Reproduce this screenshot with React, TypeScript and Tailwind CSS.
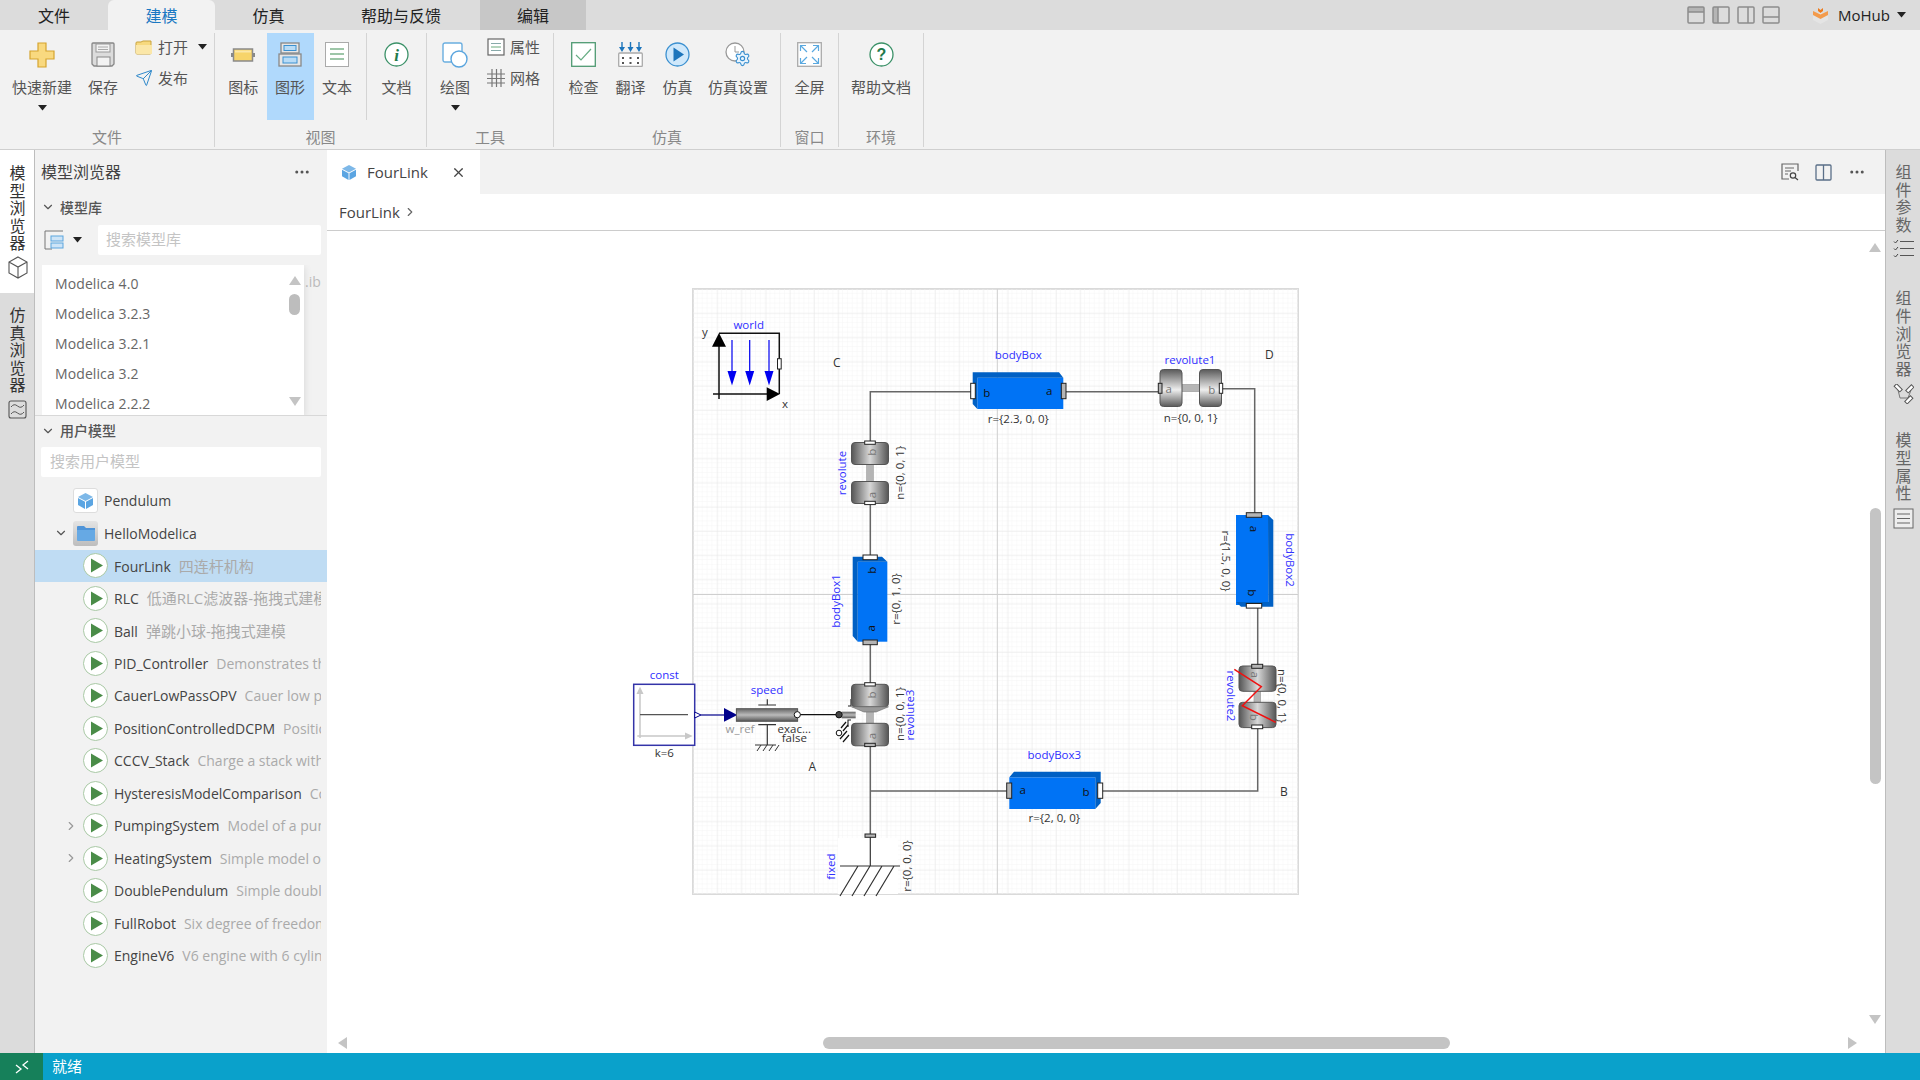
import React from "react";
import { ChevronDown, ChevronRight, Ellipsis, Send, Settings, X } from "lucide-react";

const labelCls = "text-[15px] leading-[20px] text-[#555] whitespace-nowrap";

function Caret({ className = "" }: { className?: string }) {
  return (
    <svg width="9" height="6" viewBox="0 0 9 6" className={className}>
      <path d="M0 0H9L4.5 5.5Z" fill="#222" />
    </svg>
  );
}

function RibbonButton({
  label,
  icon,
  w,
  active,
  caret,
}: {
  label: string;
  icon: React.ReactNode;
  w: string;
  active?: boolean;
  caret?: boolean;
}) {
  return (
    <div className={`${w} h-[87px] flex flex-col items-center pt-[9px] ${active ? "bg-[#b0d9fc]" : ""}`}>
      <div className="h-[25px] flex items-center justify-center">{icon}</div>
      <div className={`${labelCls} mt-[10px]`}>{label}</div>
      {caret && <Caret className="mt-[8px]" />}
    </div>
  );
}

function SmallButton({ icon, label, caret }: { icon: React.ReactNode; label: string; caret?: boolean }) {
  return (
    <div className="h-[30px] flex items-center">
      <div className="w-[18px] flex justify-center">{icon}</div>
      <span className={`${labelCls} ml-[5px]`}>{label}</span>
      {caret && <Caret className="ml-[10px]" />}
    </div>
  );
}

function Group({ label, w, children }: { label: string; w: string; children: React.ReactNode }) {
  return (
    <div className={`${w} h-[114px] border-r border-[#d4d4d4] flex flex-col shrink-0`}>
      <div className="h-[87px] flex">{children}</div>
      <div className="h-[27px] pt-[7px] text-center text-[15px] leading-[20px] text-[#888]">{label}</div>
    </div>
  );
}

const PlusIcon = (
  <svg width="26" height="26" viewBox="0 0 26 26">
    <path d="M9 1H17V9H25V17H17V25H9V17H1V9H9Z" fill="#f9d97f" stroke="#d5a42f" strokeWidth="1.2" />
  </svg>
);
const SaveIcon = (
  <svg width="24" height="25" viewBox="0 0 24 25">
    <path d="M2 1H22Q23 1 23 2V22L21 24H3L1 22V2Q1 1 2 1Z" fill="#dcdcdc" stroke="#888" strokeWidth="1.3" />
    <rect x="5" y="2" width="14" height="8" fill="#f3f3f3" stroke="#999" />
    <path d="M7 5H17M7 7.5H17" stroke="#aaa" />
    <rect x="6" y="15" width="13" height="9" fill="#f3f3f3" stroke="#888" />
  </svg>
);
const FolderIcon = (
  <svg width="18" height="15" viewBox="0 0 18 15">
    <path d="M1 3Q1 2 2 2H6L8 1H16V13Q16 14 15 14H2Q1 14 1 13Z" fill="#f7d97e" stroke="#c9a33c" />
    <path d="M1 5H17V13Q17 14 16 14H2Q1 14 1 13Z" fill="#fbe7a8" />
  </svg>
);
const GaugeIcon = (
  <svg width="24" height="14" viewBox="0 0 24 14">
    <rect x="0" y="5" width="24" height="4" fill="#888" />
    <rect x="2.500" y="1" width="19" height="12" fill="#f7d46a" stroke="#8a8a8a" strokeWidth="1.500" />
    <rect x="4" y="2.500" width="16" height="2" fill="#fbe7a8" />
  </svg>
);
const DiagramIcon = (
  <svg width="24" height="25" viewBox="0 0 24 25">
    <rect x="3" y="1" width="18" height="10" fill="#e6e6e6" stroke="#888" strokeWidth="1.3" />
    <rect x="6" y="3.5" width="12" height="5" fill="#b9dcf6" stroke="#3b90d0" />
    <rect x="1" y="12" width="22" height="12" fill="#e6e6e6" stroke="#888" strokeWidth="1.3" />
    <rect x="5" y="15" width="14" height="6" fill="#b9dcf6" stroke="#3b90d0" />
  </svg>
);
const TextIcon = (
  <svg width="24" height="25" viewBox="0 0 24 25">
    <rect x="0.5" y="0.5" width="23" height="24" fill="#fff" stroke="#aaa" />
    <path d="M5 7H19M5 12H19M5 17H19" stroke="#7eb48c" strokeWidth="1.4" />
  </svg>
);
const InfoIcon = (
  <svg width="25" height="25" viewBox="0 0 25 25">
    <circle cx="12.5" cy="12.5" r="11.5" fill="#fff" stroke="#3b9168" strokeWidth="1.3" />
    <text x="12.5" y="18.5" textAnchor="middle" fontSize="17" fontWeight="700" fontStyle="italic" fontFamily="'Liberation Serif',serif" fill="#1f7a4c">
      i
    </text>
  </svg>
);
const DrawIcon = (
  <svg width="26" height="26" viewBox="0 0 26 26">
    <rect x="1" y="1" width="19" height="19" rx="2" fill="#fff" stroke="#6aaee0" strokeWidth="1.4" />
    <circle cx="17" cy="17" r="8" fill="#fff" stroke="#5aa5de" strokeWidth="1.4" />
  </svg>
);
const PropsIcon = (
  <svg width="18" height="18" viewBox="0 0 18 18">
    <rect x="1" y="1" width="16" height="16" fill="#fff" stroke="#666" strokeWidth="1.2" />
    <path d="M4 5.5H14" stroke="#8aa" />
    <path d="M4 9H14" stroke="#6aa97c" />
    <path d="M4 12.5H14" stroke="#8aa" />
  </svg>
);
const GridIcon = (
  <svg width="18" height="18" viewBox="0 0 18 18">
    <path d="M5 0V18M9.500 0V18M14 0V18M0 5H18M0 9.500H18M0 14H18" stroke="#777" strokeWidth="1.2" />
  </svg>
);
const CheckIcon = (
  <svg width="25" height="25" viewBox="0 0 25 25">
    <rect x="0.7" y="0.7" width="23.600" height="23.600" fill="#fff" stroke="#4f9a72" strokeWidth="1.3" />
    <path d="M5 13L10 18L20 7" fill="none" stroke="#67ad84" strokeWidth="1.2" />
  </svg>
);
const TranslateIcon = (
  <svg width="25" height="25" viewBox="0 0 25 25">
    <path d="M4 0V7M12.500 0V7M21 0V7" stroke="#1c75bc" strokeWidth="1.4" />
    <path d="M1 5H7L4 10ZM9.500 5H15.500L12.500 10ZM18 5H24L21 10Z" fill="#1c75bc" />
    <rect x="0.7" y="11" width="23.600" height="13.500" rx="1" fill="#fff" stroke="#aaa" strokeWidth="1.3" />
    <path d="M4 15H6V17H4ZM11.500 15H13.500V17H11.500ZM19 15H21V17H19ZM4 20H6V22H4ZM11.500 20H13.500V22H11.500ZM19 20H21V22H19Z" fill="#555" />
  </svg>
);
const RunIcon = (
  <svg width="25" height="25" viewBox="0 0 25 25">
    <circle cx="12.500" cy="12.500" r="11.500" fill="#cfe8fb" stroke="#3b90d0" strokeWidth="1.3" />
    <path d="M8.500 5.500L19 12.500L8.500 19.500Z" fill="#1c75bc" />
  </svg>
);
const SimSetIcon = (
  <div className="relative w-[26px] h-[25px]">
    <svg width="20" height="20" viewBox="0 0 20 20" className="absolute left-0 top-0">
      <circle cx="10" cy="10" r="9" fill="#fff" stroke="#999" strokeWidth="1.3" />
      <path d="M10 4V10H14" fill="none" stroke="#999" />
    </svg>
    <Settings size={17} strokeWidth={1.6} className="absolute right-0 bottom-0 text-[#3b90d0] fill-[#e8f4fd]" />
  </div>
);
const FullIcon = (
  <svg width="25" height="25" viewBox="0 0 25 25">
    <rect x="0.7" y="0.7" width="23.600" height="23.600" fill="#fff" stroke="#aaa" strokeWidth="1.3" />
    <path d="M4 4L10 10M21 4L15 10M4 21L10 15M21 21L15 15" stroke="#5aa9e0" strokeWidth="1.2" />
    <path d="M3.500 9V3.500H9M16 3.500H21.500V9M3.500 16V21.500H9M16 21.500H21.500V16" fill="none" stroke="#5aa9e0" strokeWidth="1.2" />
  </svg>
);
const HelpIcon = (
  <svg width="25" height="25" viewBox="0 0 25 25">
    <circle cx="12.500" cy="12.500" r="11.500" fill="#fff" stroke="#3b9168" strokeWidth="1.3" />
    <text x="12.500" y="18" textAnchor="middle" fontSize="16" fontWeight="700" fontFamily="'Liberation Sans',sans-serif" fill="#1f7a4c">
      ?
    </text>
  </svg>
);

function TopBar() {
  const tabs = [
    { t: "文件", w: "w-[108px]", c: "text-[#222]" },
    { t: "建模", w: "w-[107px]", c: "bg-[#f2f2f2] rounded-t-[6px] text-[#1a78c2]" },
    { t: "仿真", w: "w-[107px]", c: "text-[#222]" },
    { t: "帮助与反馈", w: "w-[158px]", c: "text-[#222]" },
    { t: "编辑", w: "w-[106px]", c: "bg-[#c7c7c7] text-[#222]" },
  ];
  const layouts = [
    { band: "M1 1H17V6H1Z", d: "M1 6H17" },
    { band: "M1 1H6V17H1Z", d: "M6 1V17" },
    { band: "", d: "M11 1V17" },
    { band: "", d: "M1 11H17" },
  ];
  return (
    <div className="h-[30px] bg-[#dcdcdc] flex items-center shrink-0">
      {tabs.map((t) => (
        <div key={t.t} className={`${t.w} h-[30px] leading-[32px] text-center text-[16px] ${t.c}`}>
          {t.t}
        </div>
      ))}
      <div className="ml-auto flex items-center gap-[7px]">
        {layouts.map((l) => (
          <svg key={l.d} width="18" height="18" viewBox="0 0 18 18">
            {l.band && <path d={l.band} fill="#b5b5b5" />}
            <rect x="1" y="1" width="16" height="16" rx="1" fill="none" stroke="#8c8c8c" strokeWidth="1.5" />
            <path d={l.d} stroke="#8c8c8c" strokeWidth="1.5" />
          </svg>
        ))}
      </div>
      <svg width="17" height="17" viewBox="0 0 17 17" className="ml-[32px]">
        <path d="M8.500 5L16 8.500V13L8.500 17L1 13V8.500Z" fill="#e4e4e4" />
        <path d="M1 4L8.500 7.500L16 4V8L8.500 12L1 8Z" fill="#f39b4c" />
        <path d="M6 1L8.500 3L11 1V4L8.500 6L6 4Z" fill="#ef7a1a" />
      </svg>
      <span className="ml-[9px] text-[15px] text-[#222]">MoHub</span>
      <Caret className="ml-[7px] mr-[14px]" />
    </div>
  );
}

function Ribbon() {
  return (
    <div className="h-[120px] bg-[#f2f2f2] border-b border-[#cfcfcf] flex pt-[3px] shrink-0">
      <Group label="文件" w="w-[215px]">
        <RibbonButton w="w-[84px]" label="快速新建" icon={PlusIcon} caret />
        <RibbonButton w="w-[38px]" label="保存" icon={SaveIcon} />
        <div className="ml-[13px] -mt-[1px] flex flex-col gap-[1px]">
          <SmallButton icon={FolderIcon} label="打开" caret />
          <SmallButton icon={<Send size={18} strokeWidth={1.3} className="text-[#2a86c8]" />} label="发布" />
        </div>
      </Group>
      <Group label="视图" w="w-[212px]">
        <div className="w-[5px]" />
        <RibbonButton w="w-[47px]" label="图标" icon={GaugeIcon} />
        <RibbonButton w="w-[47px]" label="图形" icon={DiagramIcon} active />
        <RibbonButton w="w-[47px]" label="文本" icon={TextIcon} />
        <div className="ml-[6px] h-[87px] border-l border-[#d4d4d4]" />
        <RibbonButton w="w-[59px]" label="文档" icon={InfoIcon} />
      </Group>
      <Group label="工具" w="w-[127px]">
        <RibbonButton w="w-[56px]" label="绘图" icon={DrawIcon} caret />
        <div className="ml-[4px] -mt-[1px] flex flex-col gap-[1px]">
          <SmallButton icon={PropsIcon} label="属性" />
          <SmallButton icon={GridIcon} label="网格" />
        </div>
      </Group>
      <Group label="仿真" w="w-[227px]">
        <div className="w-[6px]" />
        <RibbonButton w="w-[47px]" label="检查" icon={CheckIcon} />
        <RibbonButton w="w-[47px]" label="翻译" icon={TranslateIcon} />
        <RibbonButton w="w-[47px]" label="仿真" icon={RunIcon} />
        <RibbonButton w="w-[74px]" label="仿真设置" icon={SimSetIcon} />
      </Group>
      <Group label="窗口" w="w-[58px]">
        <RibbonButton w="w-[57px]" label="全屏" icon={FullIcon} />
      </Group>
      <Group label="环境" w="w-[85px]">
        <RibbonButton w="w-[84px]" label="帮助文档" icon={HelpIcon} />
      </Group>
    </div>
  );
}

function VText({ text, className = "" }: { text: string; className?: string }) {
  return (
    <div className={`flex flex-col items-center text-[16px] ${className}`}>
      {text.split("").map((c, i) => (
        <span key={i} className="block h-[17.6px] leading-[17.6px]">
          {c}
        </span>
      ))}
    </div>
  );
}

function LeftRail() {
  return (
    <div className="w-[35px] shrink-0 bg-[#dcdcdc] border-r border-[#bdbdbd] flex flex-col">
      <div className="h-[143px] bg-white flex flex-col items-center pt-[15px] pl-[1px] text-[#333]">
        <VText text="模型浏览器" />
        <svg width="20" height="23" viewBox="0 0 20 23" className="mt-[3px]">
          <path d="M10 1L19 6V17L10 22L1 17V6Z M1 6L10 11L19 6 M10 11V22" fill="#fff" stroke="#555" strokeWidth="1.1" />
        </svg>
      </div>
      <div className="flex flex-col items-center pt-[14px] pl-[1px] text-[#333]">
        <VText text="仿真浏览器" />
        <svg width="19" height="19" viewBox="0 0 19 19" className="mt-[5px]">
          <rect x="1" y="1" width="17" height="17" rx="2" fill="none" stroke="#555" strokeWidth="1.1" />
          <path d="M3 7Q6 3 9.500 6T16 5M3 14Q6 10 9.500 13T16 12" fill="none" stroke="#555" />
        </svg>
      </div>
    </div>
  );
}

function RightRail() {
  return (
    <div className="w-[35px] shrink-0 bg-[#dcdcdc] border-l border-[#bdbdbd] flex flex-col items-center text-[#666] pt-[14px] pl-[1px]">
      <VText text="组件参数" />
      <svg width="21" height="19" viewBox="0 0 21 19" className="mt-[5px]">
        <path d="M7 2.500H21M7 9.500H21M7 16.500H21" stroke="#555" />
        <path d="M1 2.500L2.500 4L5 1M1 9.500L2.500 11L5 8M1 16.500L2.500 18L5 15" fill="none" stroke="#444" />
      </svg>
      <VText text="组件浏览器" className="mt-[32px]" />
      <svg width="21" height="20" viewBox="0 0 21 20" className="mt-[6px]">
        <path d="M5 6L7 14H15L18 6" fill="none" stroke="#777" />
        <rect x="1" y="2" width="8" height="3.500" transform="rotate(45 5 4)" fill="#fff" stroke="#555" />
        <rect x="13" y="3" width="8" height="3.500" transform="rotate(-45 17 5)" fill="#fff" stroke="#555" />
        <rect x="12" y="14" width="8" height="3.500" transform="rotate(-45 16 16)" fill="#fff" stroke="#555" />
      </svg>
      <VText text="模型属性" className="mt-[28px]" />
      <svg width="21" height="21" viewBox="0 0 21 21" className="mt-[5px]">
        <rect x="1" y="1" width="19" height="19" fill="#eee" stroke="#666" />
        <path d="M4 6H17M4 10.500H17M4 15H17" stroke="#666" />
      </svg>
    </div>
  );
}

const tree = [
  { n: "FourLink", d: "四连杆机构", sel: true },
  { n: "RLC", d: "低通RLC滤波器-拖拽式建模" },
  { n: "Ball", d: "弹跳小球-拖拽式建模" },
  { n: "PID_Controller", d: "Demonstrates the usage" },
  { n: "CauerLowPassOPV", d: "Cauer low pass filter" },
  { n: "PositionControlledDCPM", d: "Position control" },
  { n: "CCCV_Stack", d: "Charge a stack with CCCV" },
  { n: "HysteresisModelComparison", d: "Comparison" },
  { n: "PumpingSystem", d: "Model of a pumping", exp: true },
  { n: "HeatingSystem", d: "Simple model of a heating", exp: true },
  { n: "DoublePendulum", d: "Simple double pendulum" },
  { n: "FullRobot", d: "Six degree of freedom" },
  { n: "EngineV6", d: "V6 engine with 6 cylinders" },
];

function TreeRow({ n, d, sel, exp }: { n: string; d: string; sel?: boolean; exp?: boolean }) {
  const cjk = /[^\x00-\x7F]/.test(d);
  return (
    <div className={`h-[32.5px] flex items-center pl-[48px] pr-[6px] ${sel ? "bg-[#bfdcf3]" : ""} relative`}>
      {exp && <ChevronRight size={14} className="absolute left-[29px] text-[#999]" />}
      <svg width="25" height="25" viewBox="0 0 25 25" className="shrink-0">
        <circle cx="12.500" cy="12.500" r="12" fill="#fff" stroke="#a8c8a4" />
        <path d="M8 5.500L20 12.500L8 19.500Z" fill="#4a8c48" />
      </svg>
      <div className="ml-[6px] overflow-hidden whitespace-nowrap text-[14px]">
        <span className="text-[#444]">{n}</span>
        <span className={`ml-[8px] text-[#aaa] ${cjk ? "text-[15px]" : "text-[14px]"}`}>{d}</span>
      </div>
    </div>
  );
}

function Panel() {
  return (
    <div className="w-[292px] shrink-0 bg-[#f2f2f2] flex flex-col overflow-hidden">
      <div className="h-[44px] flex items-center pl-[6px] pr-[16px] justify-between">
        <span className="text-[16px] text-[#444]">模型浏览器</span>
        <Ellipsis size={18} className="text-[#555]" />
      </div>
      <div className="h-[28px] flex items-center pl-[6px] pb-[2px] text-[14px] text-[#555] font-medium">
        <ChevronDown size={14} className="text-[#555]" />
        <span className="ml-[5px]">模型库</span>
      </div>
      <div className="mt-[3px] h-[30px] flex items-center pl-[9px]">
        <svg width="20" height="20" viewBox="0 0 20 20">
          <path d="M19 1H1V19H8" fill="none" stroke="#777" />
          <rect x="7" y="6" width="12" height="5" fill="#cde4f7" stroke="#5aa5de" />
          <rect x="7" y="13" width="12" height="5" fill="#cde4f7" stroke="#5aa5de" />
        </svg>
        <Caret className="ml-[9px]" />
        <div className="ml-[16px] w-[223px] h-[30px] bg-white rounded-[2px] flex items-center pl-[8px] pb-[2px] text-[15px] text-[#c4c4c4]">
          搜索模型库
        </div>
      </div>
      <div className="mt-[10px] h-[150px] flex ml-[7px] overflow-hidden">
        <div className="w-[262px] shrink-0 bg-white pt-[3.500px] pl-[13px] relative shadow-[0_2px_8px_rgba(0,0,0,0.12)] text-[14px] tracking-[0.1px] text-[#666]">
          {["Modelica 4.0", "Modelica 3.2.3", "Modelica 3.2.1", "Modelica 3.2", "Modelica 2.2.2"].map((m) => (
            <div key={m} className="h-[30px] leading-[30px]">
              {m}
            </div>
          ))}
          <svg width="12" height="9" viewBox="0 0 12 9" className="absolute left-[247px] top-[11px]">
            <path d="M6 0L12 9H0Z" fill="#c4c4c4" />
          </svg>
          <div className="absolute left-[247px] top-[29px] w-[11px] h-[21px] rounded-full bg-[#bdbdbd]" />
          <svg width="12" height="9" viewBox="0 0 12 9" className="absolute left-[247px] top-[132px]">
            <path d="M0 0H12L6 9Z" fill="#c4c4c4" />
          </svg>
        </div>
        <span className="ml-[1px] mt-[6px] text-[14px] text-[#bbb]">.ib</span>
      </div>
      <div className="h-[32px] border-t border-[#d8d8d8] flex items-center pl-[6px] pb-[2px] text-[14px] text-[#555] font-medium">
        <ChevronDown size={14} className="text-[#555]" />
        <span className="ml-[5px]">用户模型</span>
      </div>
      <div className="ml-[6px] w-[280px] h-[30px] bg-white rounded-[2px] flex items-center pl-[9px] pb-[2px] text-[15px] text-[#c4c4c4]">
        搜索用户模型
      </div>
      <div className="mt-[7.500px]">
        <div className="h-[32.500px] flex items-center pl-[38px] text-[14px] text-[#444]">
          <div className="w-[25px] h-[25px] bg-white border border-[#ddd] rounded-[3px] flex items-center justify-center">
            <svg width="15" height="16" viewBox="0 0 15 16">
              <path d="M7.500 0L15 4L7.500 8L0 4Z" fill="#7db8e8" />
              <path d="M0 5L7 8.700V16L0 12Z M15 5L8 8.700V16L15 12Z" fill="#5ba5e2" />
            </svg>
          </div>
          <span className="ml-[6px]">Pendulum</span>
        </div>
        <div className="h-[32.500px] flex items-center pl-[19px] text-[14px] text-[#444]">
          <ChevronDown size={14} className="text-[#555] mr-[5px]" />
          <div className="w-[25px] h-[25px] bg-gradient-to-b from-[#e4e4e4] to-[#bdbdbd] rounded-[3px] flex items-center justify-center">
            <svg width="18" height="15" viewBox="0 0 18 15">
              <path d="M0 1Q0 0 1 0H7L9 2H18V4H0Z" fill="#4f94d8" />
              <path d="M0 4H18V14Q18 15 17 15H1Q0 15 0 14Z" fill="#66a9e4" />
            </svg>
          </div>
          <span className="ml-[6px]">HelloModelica</span>
        </div>
        {tree.map((t) => (
          <TreeRow key={t.n} {...t} />
        ))}
      </div>
    </div>
  );
}

function L({ x, y, r, c = "#333", s = 11.5, children }: { x: number; y: number; r?: number; c?: string; s?: number; children: React.ReactNode }) {
  return (
    <text
      x={x}
      y={y}
      dy={-0.8}
      fontSize={s}
      fill={c}
      textAnchor="middle"
      dominantBaseline="central"
      transform={r ? `rotate(${r} ${x} ${y})` : undefined}
    >
      {children}
    </text>
  );
}

function Port({ x, y, w, h, grey }: { x: number; y: number; w: number; h: number; grey?: boolean }) {
  return <rect x={x} y={y} width={w} height={h} fill={grey ? "#b5b5b5" : "#fff"} stroke="#222" strokeWidth="1" />;
}

function VJoint({ top, h1, gap }: { top: number; h1: number; gap: number }) {
  return (
    <g>
      <rect x="866.700" y={top + h1 - 1} width="6.600" height={gap + 2} fill="#b5b5b5" stroke="#999" strokeWidth="0.600" />
      <rect x="851.500" y={top} width="37" height={h1} rx="3.500" fill="url(#wheelH)" stroke="#555" />
      <rect x="851.500" y={top + h1 + gap} width="37" height={h1} rx="3.500" fill="url(#wheelH)" stroke="#555" />
    </g>
  );
}

const line = "#666";
const blue = "#2f2fff";

function Diagram() {
  return (
    <svg width="690" height="620" viewBox="620 280 690 620" className="block ml-[293px] mt-[49px]">
      <defs>
        <pattern id="minor" x="693" y="289" width="4.840" height="4.840" patternUnits="userSpaceOnUse">
          <path d="M4.840 0V4.840H0" fill="none" stroke="#f5f5f5" strokeWidth="1" />
        </pattern>
        <pattern id="major" x="693" y="289" width="24.200" height="24.200" patternUnits="userSpaceOnUse">
          <path d="M0 24.200V0H24.200" fill="none" stroke="#e8e8e8" strokeWidth="1" />
        </pattern>
        <linearGradient id="wheelH" x1="0" x2="1" y1="0" y2="0">
          <stop offset="0" stopColor="#555" />
          <stop offset="0.500" stopColor="#d8d8d8" />
          <stop offset="1" stopColor="#555" />
        </linearGradient>
        <linearGradient id="wheelV" x1="0" x2="0" y1="0" y2="1">
          <stop offset="0" stopColor="#5a5a5a" />
          <stop offset="0.550" stopColor="#eeeeee" />
          <stop offset="1" stopColor="#5a5a5a" />
        </linearGradient>
        <linearGradient id="shaftV" x1="0" x2="0" y1="0" y2="1">
          <stop offset="0" stopColor="#666" />
          <stop offset="0.500" stopColor="#bbb" />
          <stop offset="1" stopColor="#555" />
        </linearGradient>
      </defs>

      {/* sheet */}
      <rect x="693" y="289" width="605" height="605" fill="#fff" stroke="#dadada" strokeWidth="2" />
      <rect x="693" y="289" width="605" height="605" fill="url(#minor)" />
      <rect x="693" y="289" width="605" height="605" fill="url(#major)" />
      <path d="M997.300 289V894M693 594.500H1298" stroke="#cfcfcf" strokeWidth="1" />

      {/* wires */}
      <path
        d="M870.300 444V391.700H972M1064 391.700H1160M1221 388.700H1254.700V514M1257.700 606V666M1257.700 727V791H1101M1008 791H870.300M870.300 504V557M870.300 642V684M870.300 745V866"
        fill="none"
        stroke={line}
        strokeWidth="1.500"
      />

      {/* world */}
      <L x={748.700} y={325} c={blue}>world</L>
      <L x={705} y={332}>y</L>
      <L x={785} y={404}>x</L>
      <path d="M719 333.300H779.300V394M719 340V399M713 394H768" fill="none" stroke="#111" strokeWidth="1.500" />
      <path d="M719 333L712 346.700H726ZM780 394L766.700 387.300V401Z" fill="#000" />
      <path d="M732 340V372M749.700 340V372M769 340V372" stroke="#0000f0" strokeWidth="1.200" />
      <path d="M727.500 371H736.500L732 385.500ZM745.200 371H754.200L749.700 385.500ZM764.500 371H773.500L769 385.500Z" fill="#0000f0" />
      <Port x={777.500} y={358.700} w={3.700} h={10.300} />
      <L x={836.700} y={363} s={12}>C</L>

      {/* revolute */}
      <VJoint top={442.500} h1={22} gap={17} />
      <Port x={864.700} y={441} w={10.600} h={3.300} />
      <Port x={864.700} y={501.300} w={10.600} h={3.300} />
      <L x={872.700} y={452.300} r={-90} c="#777">b</L>
      <L x={872.700} y={495} r={-90} c="#777">a</L>
      <L x={842.700} y={473} r={-90} c={blue}>revolute</L>
      <L x={900.700} y={472.700} r={-90}>n={"{0, 0, 1}"}</L>

      {/* bodyBox */}
      <rect x="977.300" y="377.700" width="86" height="31.300" fill="#0073f5" />
      <path d="M972.700 372.300H1059L1063.300 377.700H977.300V409L972.700 404Z" fill="#0060c4" />
      <Port x={970.700} y={383.300} w={4.600} h={15.400} />
      <Port x={1061.300} y={383.300} w={4.700} h={15.400} grey />
      <L x={986.700} y={393} c="#111">b</L>
      <L x={1049.300} y={391.700} c="#111">a</L>
      <L x={1018.300} y={355} c={blue}>bodyBox</L>
      <L x={1018.300} y={419}>r={"{2.3, 0, 0}"}</L>

      {/* revolute1 */}
      <rect x="1181" y="384.300" width="19" height="7.400" fill="#b5b5b5" stroke="#999" strokeWidth="0.600" />
      <rect x="1160" y="369.500" width="22" height="37" rx="3.500" fill="url(#wheelV)" stroke="#555" />
      <rect x="1199.500" y="369.500" width="22" height="37" rx="3.500" fill="url(#wheelV)" stroke="#555" />
      <Port x={1158.300} y={383.300} w={3.700} h={10} grey />
      <Port x={1219.300} y={383.300} w={3.400} h={10} />
      <L x={1168.700} y={389.300} c="#777">a</L>
      <L x={1211.700} y={390} c="#777">b</L>
      <L x={1190} y={360} c={blue}>revolute1</L>
      <L x={1190.700} y={418.300}>n={"{0, 0, 1}"}</L>
      <L x={1269.300} y={355} s={12}>D</L>

      {/* bodyBox2 */}
      <rect x="1236" y="515" width="32.300" height="90" fill="#0073f5" />
      <path d="M1268 515L1273.300 520V606.700H1241L1236 602H1268.300Z" fill="#0060c4" />
      <Port x={1246.300} y={512.700} w={15.400} h={4.600} grey />
      <Port x={1246.300} y={603.500} w={15.400} h={4.600} />
      <L x={1253.300} y={529} r={90} c="#111">a</L>
      <L x={1252} y={592.700} r={90} c="#111">b</L>
      <L x={1225.300} y={561} r={90}>r={"{1.5, 0, 0}"}</L>
      <L x={1290} y={560} r={90} c={blue}>bodyBox2</L>

      {/* bodyBox1 */}
      <rect x="857.700" y="561.700" width="29.600" height="80" fill="#0073f5" />
      <path d="M852.700 556.700H882L887.300 561.700H857.700V641.700L852.700 636Z" fill="#0060c4" />
      <Port x={863} y={555} w={14.300} h={4.700} />
      <Port x={863} y={640} w={14.300} h={4.700} grey />
      <L x={872.700} y={570.300} r={-90} c="#111">b</L>
      <L x={871} y={628.300} r={-90} c="#111">a</L>
      <L x={836.700} y={601} r={-90} c={blue}>bodyBox1</L>
      <L x={896.700} y={599} r={-90}>r={"{0, 1, 0}"}</L>

      {/* const */}
      <L x={664.300} y={675} c={blue}>const</L>
      <rect x="633.700" y="684.300" width="61" height="61" fill="#fff" stroke="#3434a8" strokeWidth="1.500" />
      <path d="M640 692V738M637.300 736H688" stroke="#c8c8c8" strokeWidth="1.500" />
      <path d="M640 686.700L636.500 694H643.500ZM692.700 736L685 732.500V739.500Z" fill="#c8c8c8" />
      <path d="M640 714.700H688" stroke="#555" strokeWidth="1.300" />
      <path d="M694.700 712L701 715L694.700 718Z" fill="#fff" stroke="#00008b" />
      <path d="M701 715H724" stroke="#00008b" strokeWidth="1.200" />
      <path d="M724 708L737.300 715L724 721.700Z" fill="#00008b" />
      <L x={664.300} y={753}>k=6</L>

      {/* speed */}
      <L x={767} y={690} c={blue}>speed</L>
      <rect x="736.300" y="708.700" width="61.400" height="12.600" fill="url(#shaftV)" stroke="#444" strokeWidth="0.800" />
      <path d="M767.300 699.300V705M758.300 705H776M758.300 724.700H776M767.300 724.700V745M755 745H776" fill="none" stroke="#333" strokeWidth="1.200" />
      <path d="M757 751L761 745M763 751L767 745M769 751L773 745M775 751L779 745" stroke="#333" />
      <L x={740} y={729} c="#999">w_ref</L>
      <L x={794.300} y={729.300}>exac...</L>
      <L x={794.300} y={738.300}>false</L>
      <L x={812.300} y={767.700} s={12}>A</L>
      <path d="M800 714.700H836" stroke="#111" strokeWidth="1.300" />
      <circle cx="797.300" cy="714.700" r="3.100" fill="#fff" stroke="#111" />

      {/* revolute3 */}
      <rect x="841.700" y="711.700" width="14" height="6.600" fill="url(#shaftV)" />
      <circle cx="839" cy="714.700" r="3.200" fill="#444" stroke="#111" />
      <path d="M851 699V706H848M851 720H848V727" fill="none" stroke="#222" strokeWidth="1.100" />
      <circle cx="839" cy="733" r="2.800" fill="#fff" stroke="#111" />
      <path d="M841 728L846 722M843 731L848 725M840 739L847 731M843 742L849 735" stroke="#111" strokeWidth="1.200" />
      <VJoint top={684.300} h1={22.500} gap={16.500} />
      <path d="M851.500 706.800H888.500L876 712H864Z" fill="#999" stroke="#666" strokeWidth="0.600" />
      <Port x={864.700} y={682.700} w={10.600} h={3.300} />
      <Port x={864.700} y={743.300} w={10.600} h={3.300} grey />
      <L x={872.700} y={695} r={-90} c="#777">b</L>
      <L x={872.700} y={736} r={-90} c="#777">a</L>
      <L x={900.700} y={714} r={-90}>n={"{0, 0, 1}"}</L>
      <L x={910.700} y={715} r={-90} c={blue}>revolute3</L>

      {/* revolute2 */}
      <rect x="1254" y="690" width="6.700" height="13" fill="#b5b5b5" stroke="#999" strokeWidth="0.600" />
      <rect x="1239" y="666" width="37" height="25.300" rx="3.500" fill="url(#wheelH)" stroke="#555" />
      <rect x="1239" y="702.300" width="37" height="25.300" rx="3.500" fill="url(#wheelH)" stroke="#555" />
      <Port x={1251.700} y={664.300} w={11} h={4} grey />
      <Port x={1251.700} y={725} w={11} h={3.700} />
      <L x={1254.300} y={674.700} r={90} c="#777">a</L>
      <L x={1253.300} y={717.300} r={90} c="#777">b</L>
      <path d="M1234.300 669.300L1261.300 686.700L1242.300 705.700L1275.700 722.300" fill="none" stroke="#f01010" strokeWidth="1.500" />
      <L x={1230.700} y={696} r={90} c={blue}>revolute2</L>
      <L x={1281.700} y={696} r={90}>n={"{0, 0, 1}"}</L>

      {/* bodyBox3 */}
      <rect x="1009.300" y="777.300" width="86" height="31.700" fill="#0073f5" />
      <path d="M1014 771.700H1100.700V803L1095.300 809V777.300H1009.300Z" fill="#0060c4" />
      <Port x={1006.700} y={783} w={5} h={15.300} grey />
      <Port x={1097.700} y={783} w={5} h={15.300} />
      <L x={1022.700} y={790.700} c="#111">a</L>
      <L x={1086} y={792.300} c="#111">b</L>
      <L x={1054.300} y={755} c={blue}>bodyBox3</L>
      <L x={1054.300} y={818.300}>r={"{2, 0, 0}"}</L>
      <L x={1284} y={792.700} s={12}>B</L>

      {/* fixed */}
      <rect x="838" y="838" width="60" height="56" fill="#fff" />
      <path d="M870.300 838V866M840 866H900M858 866L840 896M870 866L852 896M882 866L864 896M894 866L876 896" fill="none" stroke="#333" strokeWidth="1.200" />
      <Port x={865} y={834} w={10.600} h={3.300} grey />
      <L x={831} y={866.700} r={-90} c={blue}>fixed</L>
      <L x={907.300} y={866} r={-90}>r={"{0, 0, 0}"}</L>
    </svg>
  );
}

function Editor() {
  return (
    <div className="flex-1 min-w-0 flex flex-col bg-white">
      <div className="h-[44px] bg-[#f2f2f2] flex items-center shrink-0">
        <div className="w-[153px] h-full bg-white flex items-center pl-[15px]">
          <svg width="14" height="15" viewBox="0 0 15 16">
            <path d="M7.500 0L15 4L7.500 8L0 4Z" fill="#7db8e8" />
            <path d="M0 5L7 8.700V16L0 12Z M15 5L8 8.700V16L15 12Z" fill="#5ba5e2" />
          </svg>
          <span className="ml-[11px] text-[15px] text-[#444]">FourLink</span>
          <X size={15} className="ml-[23px] text-[#444]" />
        </div>
        <div className="ml-auto flex items-center gap-[16px] pr-[19px]">
          <svg width="18" height="18" viewBox="0 0 18 18">
            <path d="M8 16H1V1H17V8" fill="none" stroke="#666" strokeWidth="1.200" />
            <path d="M4 5H13M4 8H10M4 11H7" stroke="#666" />
            <circle cx="12" cy="12.500" r="2.700" fill="none" stroke="#444" strokeWidth="1.200" />
            <path d="M14 14.500L17 17" stroke="#444" strokeWidth="1.200" />
          </svg>
          <svg width="17" height="17" viewBox="0 0 17 17">
            <rect x="1" y="1" width="15" height="15" rx="1" fill="none" stroke="#5a6f88" strokeWidth="1.300" />
            <path d="M8.500 1V16" stroke="#5a6f88" strokeWidth="1.300" />
          </svg>
          <Ellipsis size={18} className="text-[#555]" />
        </div>
      </div>
      <div className="h-[37px] border-b border-[#ccc] flex items-center pl-[12px] text-[15px] text-[#444] shrink-0">
        FourLink
        <ChevronRight size={14} className="ml-[3px] text-[#666]" />
      </div>
      <div className="flex-1 relative overflow-hidden">
        <Diagram />
        {/* scrollbars */}
        <svg width="12" height="9" viewBox="0 0 12 9" className="absolute left-[1542px] top-[12px]">
          <path d="M6 0L12 9H0Z" fill="#c4c4c4" />
        </svg>
        <div className="absolute left-[1543px] top-[277px] w-[11px] h-[276px] rounded-full bg-[#c4c4c4]" />
        <svg width="12" height="9" viewBox="0 0 12 9" className="absolute left-[1542px] top-[784px]">
          <path d="M0 0H12L6 9Z" fill="#c4c4c4" />
        </svg>
        <svg width="9" height="12" viewBox="0 0 9 12" className="absolute left-[11px] top-[806px]">
          <path d="M9 0V12L0 6Z" fill="#c4c4c4" />
        </svg>
        <div className="absolute left-[496px] top-[806px] w-[627px] h-[12px] rounded-full bg-[#c4c4c4]" />
        <svg width="9" height="12" viewBox="0 0 9 12" className="absolute left-[1521px] top-[806px]">
          <path d="M0 0V12L9 6Z" fill="#c4c4c4" />
        </svg>
      </div>
    </div>
  );
}

export default function App() {
  return (
    <div className="w-[1920px] h-[1080px] overflow-hidden flex flex-col bg-white font-['Open_Sans','Noto_Sans_CJK_SC',sans-serif]">
      <TopBar />
      <Ribbon />
      <div className="flex-1 min-h-0 flex">
        <LeftRail />
        <Panel />
        <Editor />
        <RightRail />
      </div>
      <div className="h-[27px] bg-[#0aa1cb] flex items-center shrink-0">
        <div className="w-[43px] h-full bg-[#16805a] flex items-center justify-center">
          <svg width="14" height="14" viewBox="0 0 14 14">
            <path d="M1 5L6 9L1 13M13 1L8 5L13 9" fill="none" stroke="#fff" strokeWidth="1.300" />
          </svg>
        </div>
        <span className="ml-[9px] text-[15px] text-white">就绪</span>
      </div>
    </div>
  );
}
